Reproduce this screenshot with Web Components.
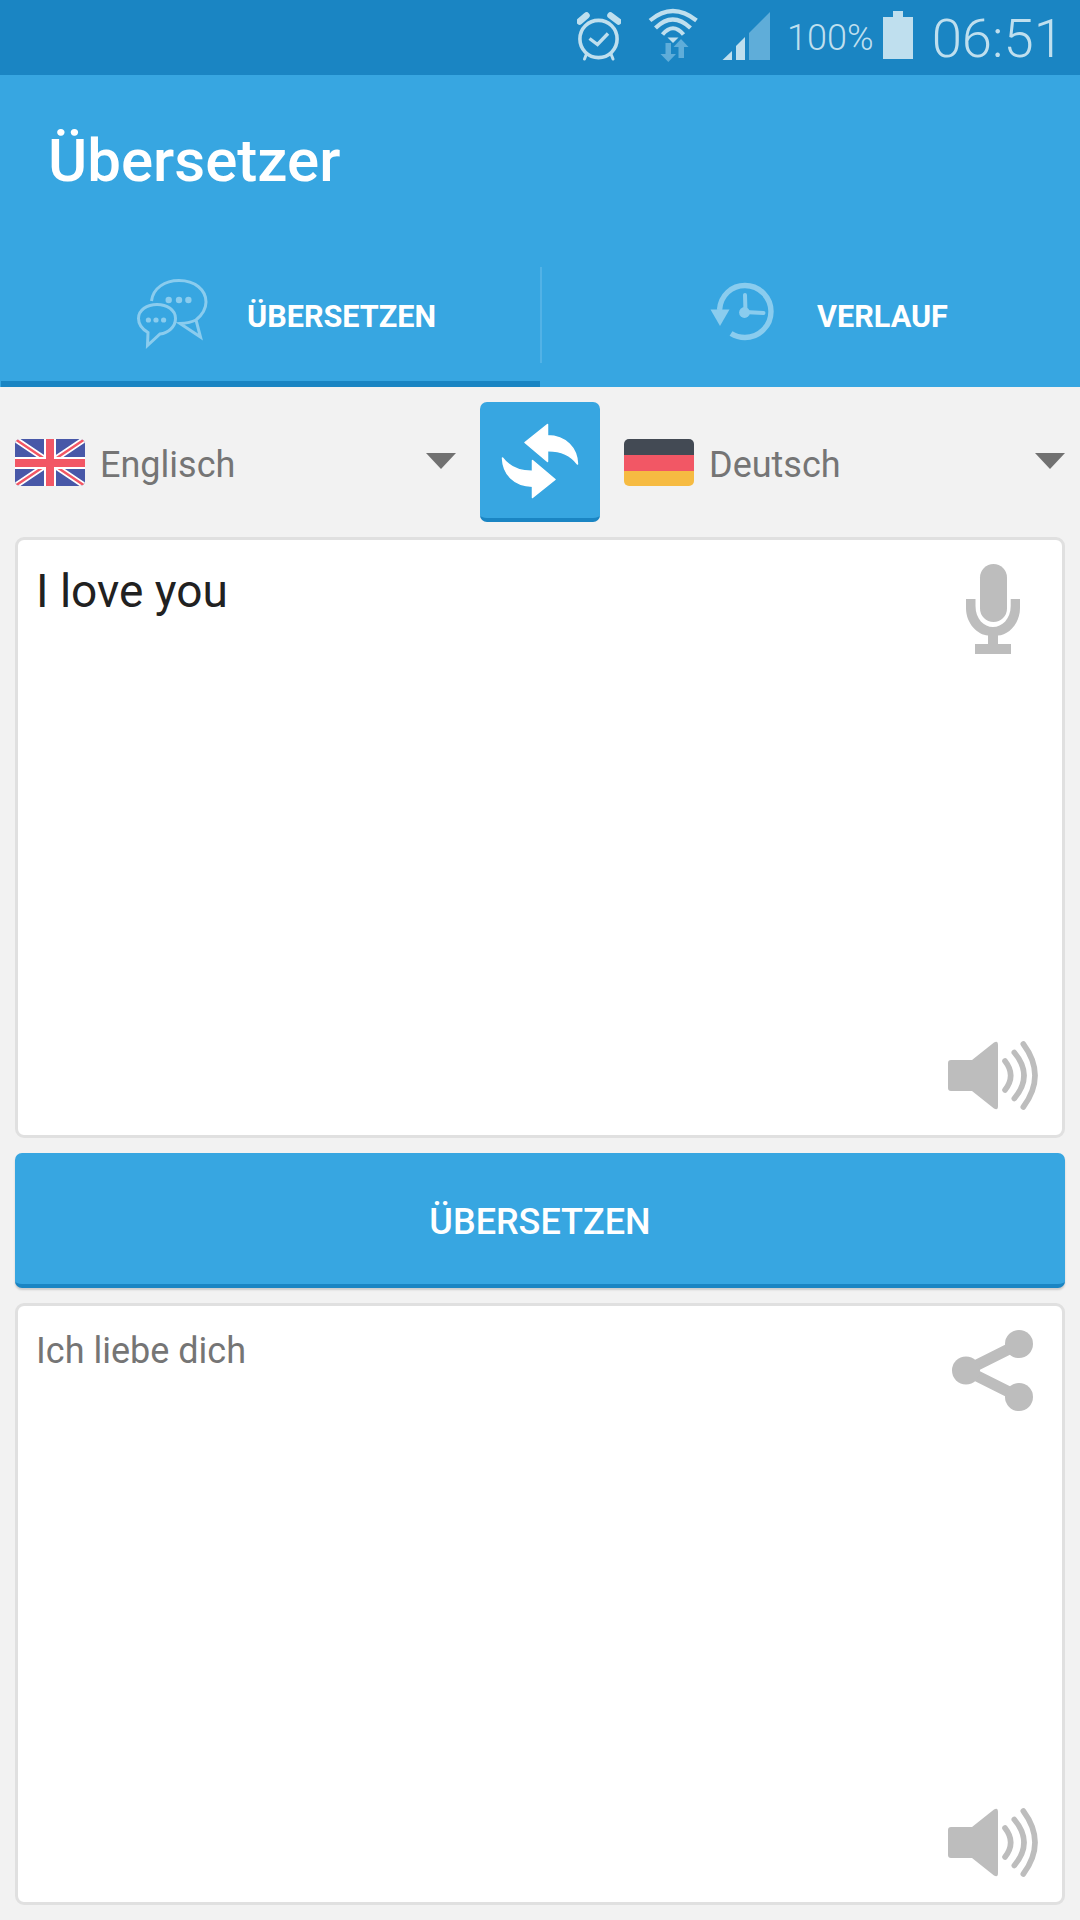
<!DOCTYPE html>
<html lang="de">
<head>
<meta charset="utf-8">
<title>Übersetzer</title>
<style>
    html, body { margin: 0; padding: 0; background: #f2f2f2; }
    body { font-family: Roboto, "Liberation Sans", sans-serif; width: 1080px; height: 1920px; overflow: hidden; }
    translator-app { --blue: #37a6e1; --dark-blue: #1a85c3; --soft: #bfdfee; --grey: #757575; --icon: #bdbdbd; }
</style>
</head>
<body>
<translator-app></translator-app>

<script>
const icons = {
    alarm: `<svg width="44" height="75" viewBox="576 0 44 75" fill="none" stroke="currentColor">
        <circle cx="597.5" cy="39" r="18.6" stroke-width="3.6"/>
        <path d="M578.5 21.5L585.5 15.5M609.5 15.5L617.5 21.5" stroke-width="6.5" stroke-linecap="round"/>
        <path d="M585.5 54L583.5 59M610 54L612 59" stroke-width="3" stroke-linecap="round"/>
        <path d="M588.5 38.5L596.5 44.5L607 33.5" stroke-width="3.4"/>
    </svg>`,
    wifi: `<svg width="50" height="75" viewBox="648 0 50 75" fill="none" stroke="currentColor">
        <path d="M650 20.5Q672.6 1.5 696.5 20.5M655.5 28Q672.6 11 690.5 28M662.5 34.5Q673 22 683.5 34.5" stroke-width="4.2"/>
        <path d="M667.5 37.5H678.5L673 43Z" fill="currentColor" stroke="none"/>
        <path d="M665.5 43H671V54H676L668.3 62L660.5 54H665.5ZM678.5 58V47H673.5L681 39L688.5 47H684V58Z" fill="#5fadd9" stroke="none"/>
    </svg>`,
    signal: `<svg width="48" height="75" viewBox="721 0 48 75">
        <path d="M721.5 60L731 51V60Z" fill="currentColor"/>
        <path d="M735 60V46L744 37V60Z" fill="currentColor"/>
        <path d="M748 60V33L769 12V60Z" fill="#5fadd9"/>
    </svg>`,
    battery: `<svg width="30" height="75" viewBox="882 0 30 75">
        <path d="M892 11H902V17H912V59H882V17H892Z" fill="currentColor"/>
    </svg>`,
    chat: `<svg width="72" height="96" viewBox="136 267 72 96" fill="none" stroke="#8accee" stroke-width="3">
        <path d="M151.5 301C153 288 165 280.5 179 280.5C195 280.5 206 290 206 302C206 309 202 315 196 320L200.5 337L180 323.5C188 323 192 322 196 320"/>
        <path d="M148 332.5C142 329 138.5 324 138.5 318.5C138.5 310 147 304.5 157 304.5C167 304.5 175.5 310 175.5 318.5C175.5 327 168 333 160 334L147.5 345.5Z"/>
        <g fill="#8accee" stroke="none">
            <circle cx="168.7" cy="300" r="3.2"/><circle cx="179" cy="300" r="3.2"/><circle cx="188.4" cy="300" r="3.2"/>
            <circle cx="148.4" cy="320" r="2.6"/><circle cx="156" cy="320" r="2.6"/><circle cx="163.6" cy="320" r="2.6"/>
        </g>
    </svg>`,
    history: `<svg width="64" height="96" viewBox="710 267 64 96" fill="none" stroke="#8accee">
        <path d="M719.5 310C720.5 295 732 285.5 745 285.5C760 285.5 771 298 771 311.5C771 326 759 337.5 745 337.5C740 337.5 735 336 731 333.5" stroke-width="5.4"/>
        <path d="M710.5 309.5H729.5L720 326Z" fill="#8accee" stroke="none"/>
        <circle cx="744.5" cy="312.5" r="5.4" fill="#8accee" stroke="none"/>
        <path d="M745 295L745.5 312L763.5 313" stroke-width="4" stroke-linecap="round"/>
    </svg>`,
    uk: `<svg width="70" height="47" viewBox="0 0 70 47">
        <defs><clipPath id="r"><rect width="70" height="47" rx="5"/></clipPath></defs>
        <g clip-path="url(#r)">
            <rect width="70" height="47" fill="#4858a8"/>
            <path d="M0 0L70 47M70 0L0 47" stroke="#fff" stroke-width="6"/>
            <path d="M0 0L70 47M70 0L0 47" stroke="#f25765" stroke-width="2.4"/>
            <path d="M29 0H41V18H70V30H41V47H29V30H0V18H29Z" fill="#fff"/>
            <path d="M31 0H39V20H70V28H39V47H31V28H0V20H31Z" fill="#f25765"/>
        </g>
    </svg>`,
    de: `<svg width="70" height="47" viewBox="0 0 70 47">
        <defs><clipPath id="g"><rect width="70" height="47" rx="5"/></clipPath></defs>
        <g clip-path="url(#g)">
            <rect width="70" height="16" fill="#434a54"/>
            <rect y="16" width="70" height="16" fill="#f25765"/>
            <rect y="32" width="70" height="15" fill="#f6bb42"/>
        </g>
    </svg>`,
    swap: `<svg width="120" height="116" viewBox="480 402 120 116" fill="#fff" stroke="#fff" stroke-width="1.5" stroke-linejoin="round">
        <path d="M525 442.5L547.5 424.5V435.7C566 436 577 448 577.5 464C570 454 560 450.5 547.5 450.7V461.5Z"/>
        <path d="M555 479.5L532.5 497.5V486.3C514 486 503 474 502.5 458C510 468 520 471.5 532.5 471.3V460.5Z"/>
    </svg>`,
    mic: `<svg slot="top" width="54" height="90" viewBox="966 564 54 90" fill="#bdbdbd" style="margin-right:18px">
        <rect x="980" y="564" width="27" height="58" rx="13.5"/>
        <path d="M966 599H975.5V606C975.5 619 984 627 993 627S1010.7 619 1010.7 606V599H1020V608C1020 624 1008 635 998 635.5V644H1011V654H975V644H988V635.5C978 635 966 624 966 608Z"/>
    </svg>`,
    share: `<svg slot="top" width="81" height="81" viewBox="952 1330 81 81" fill="#bdbdbd" style="margin-right:5px">
        <path d="M1019 1344L966 1370.5L1019 1397" fill="none" stroke="#bdbdbd" stroke-width="11"/>
        <circle cx="1019" cy="1344" r="14"/><circle cx="966" cy="1370.5" r="14"/><circle cx="1019" cy="1397" r="14"/>
    </svg>`,
    speaker: `<svg slot="bottom" width="90" height="70" viewBox="948 1042 90 70" fill="#bdbdbd">
        <path d="M951 1061H972L994 1043.5Q998 1041 998 1046V1107Q998 1112 994 1109.5L972 1092H951Q948 1092 948 1089V1064Q948 1061 951 1061Z"/>
        <path d="M1005 1062Q1016.4 1076.5 1005 1091M1014.3 1053.5Q1033.7 1076.5 1014.3 1099.5M1023.3 1045Q1046.7 1076.5 1023.3 1108" fill="none" stroke="#bdbdbd" stroke-width="5.6" stroke-linecap="round"/>
    </svg>`
};

class StatusBar extends HTMLElement {
    constructor() {
        super();
        this.attachShadow({ mode: "open" });
        this.shadowRoot.innerHTML = `
        <style>
            :host { display: flex; justify-content: flex-end; align-items: center; height: 75px; padding-right: 16px; background: var(--dark-blue); color: var(--soft); }
            svg { display: block; }
            #alarm { margin-right: 27px; }
            #wifi { margin-right: 24px; }
            #signal { margin-right: 17px; }
            #percent { font-size: 36px; font-weight: 300; margin-right: 9px; }
            #battery { margin-right: 19px; }
            #time { font-size: 54.5px; font-weight: 300; }
        </style>
        <span id="alarm">${icons.alarm}</span>
        <span id="wifi">${icons.wifi}</span>
        <span id="signal">${icons.signal}</span>
        <span id="percent">100%</span>
        <span id="battery">${icons.battery}</span>
        <span id="time">06:51</span>
        `;
    }
}
customElements.define("status-bar", StatusBar);

class AppTitle extends HTMLElement {
    constructor() {
        super();
        this.attachShadow({ mode: "open" });
        this.shadowRoot.innerHTML = `
        <style>
            :host { display: flex; align-items: center; height: 192px; box-sizing: border-box; padding: 0 0 22px 48px; background: var(--blue); color: #fff; font-size: 60px; font-weight: 500; }
        </style>
        <slot></slot>
        `;
    }
}
customElements.define("app-title", AppTitle);

class TabItem extends HTMLElement {
    constructor() {
        super();
        this.attachShadow({ mode: "open" });
        this.shadowRoot.innerHTML = `
        <style>
            :host { display: flex; align-items: center; box-sizing: border-box; height: 120px; padding-bottom: 24px; font-size: 30.6px; font-weight: 700; color: #fff; }
            :host([active]) { box-shadow: inset 0 -6px 0 var(--dark-blue); }
            ::slotted(svg) { display: block; flex: none; }
            #label { padding-top: 2px; }
        </style>
        <slot name="icon"></slot>
        <span id="label"><slot></slot></span>
        `;
    }
}
customElements.define("tab-item", TabItem);

class TabBar extends HTMLElement {
    constructor() {
        super();
        this.attachShadow({ mode: "open" });
        this.shadowRoot.innerHTML = `
        <style>
            :host { display: grid; grid-template-columns: 539px 2px 1fr; height: 120px; background: var(--blue); padding-left: 1px; }
            #divider { height: 96px; background: #52b2e6; }
        </style>
        <slot name="first"></slot>
        <div id="divider"></div>
        <slot name="second"></slot>
        `;
    }
}
customElements.define("tab-bar", TabBar);

class LangSelect extends HTMLElement {
    constructor() {
        super();
        this.attachShadow({ mode: "open" });
        this.shadowRoot.innerHTML = `
        <style>
            :host { display: flex; align-items: center; flex: 1 1 0; font-size: 36px; color: var(--grey); }
            #flag { flex: none; display: flex; margin-right: 15px; }
            #name { flex: 1; padding-top: 5px; }
            #arrow { width: 0; height: 0; border-left: 15px solid transparent; border-right: 15px solid transparent; border-top: 16px solid #717171; margin-top: -2px; }
        </style>
        <span id="flag"><slot name="flag"></slot></span>
        <span id="name"><slot></slot></span>
        <span id="arrow"></span>
        `;
    }
}
customElements.define("lang-select", LangSelect);

class SwapButton extends HTMLElement {
    constructor() {
        super();
        this.attachShadow({ mode: "open" });
        this.shadowRoot.innerHTML = `
        <style>
            :host { display: block; flex: none; width: 120px; height: 120px; box-sizing: border-box; background: var(--blue); border-bottom: 4px solid var(--dark-blue); border-radius: 7px; }
            svg { display: block; }
        </style>
        ${icons.swap}
        `;
    }
}
customElements.define("swap-button", SwapButton);

class TextCard extends HTMLElement {
    constructor() {
        super();
        this.attachShadow({ mode: "open" });
        this.shadowRoot.innerHTML = `
        <style>
            :host { display: flex; flex: none; box-sizing: border-box; background: #fff; border: 3px solid #e0e0e0; border-radius: 9px; }
            #text { flex: 1; padding-left: 18px; }
            #tools { display: flex; flex-direction: column; justify-content: space-between; align-items: flex-end; padding: 24px; }
            ::slotted(svg) { display: block; }
        </style>
        <div id="text"><slot></slot></div>
        <div id="tools">
            <slot name="top"></slot>
            <slot name="bottom"></slot>
        </div>
        `;
    }
}
customElements.define("text-card", TextCard);

class ActionButton extends HTMLElement {
    constructor() {
        super();
        this.attachShadow({ mode: "open" });
        this.shadowRoot.innerHTML = `
        <style>
            :host { display: flex; justify-content: center; align-items: center; box-sizing: border-box; height: 135px; padding-top: 7px; background: var(--blue); border-bottom: 4px solid var(--dark-blue); border-radius: 7px; box-shadow: 0 2px 2px rgba(0,0,0,.16); color: #fff; font-size: 36px; font-weight: 500; }
        </style>
        <slot></slot>
        `;
    }
}
customElements.define("action-button", ActionButton);

class TranslatorApp extends HTMLElement {
    constructor() {
        super();
        this.attachShadow({ mode: "open" });
        this.shadowRoot.innerHTML = `
        <style>
            :host { display: block; }
            #langs { display: flex; gap: 24px; padding: 15px; height: 120px; }
            #main { display: flex; flex-direction: column; gap: 15px; padding: 0 15px; }
            #input { height: 601px; }
            #output { height: 602px; }
            #inputText { display: block; font-size: 46px; color: #212121; padding-top: 24px; }
            #outputText { display: block; font-size: 36px; color: var(--grey); padding-top: 24px; }
            #first { padding-left: 135px; }
            #first svg { margin-right: 39px; }
            #second { padding-left: 168px; }
            #second svg { margin-right: 43px; }
        </style>
        <status-bar></status-bar>
        <app-title>Übersetzer</app-title>
        <tab-bar>
            <tab-item id="first" slot="first" active>${icons.chat.replace("<svg", '<svg slot="icon"')}ÜBERSETZEN</tab-item>
            <tab-item id="second" slot="second">${icons.history.replace("<svg", '<svg slot="icon"')}VERLAUF</tab-item>
        </tab-bar>
        <div id="langs">
            <lang-select>${icons.uk.replace("<svg", '<svg slot="flag"')}Englisch</lang-select>
            <swap-button></swap-button>
            <lang-select>${icons.de.replace("<svg", '<svg slot="flag"')}Deutsch</lang-select>
        </div>
        <div id="main">
            <text-card id="input">
                <span id="inputText">I love you</span>
                ${icons.mic}
                ${icons.speaker}
            </text-card>
            <action-button>ÜBERSETZEN</action-button>
            <text-card id="output">
                <span id="outputText">Ich liebe dich</span>
                ${icons.share}
                ${icons.speaker}
            </text-card>
        </div>
        `;
    }
}
customElements.define("translator-app", TranslatorApp);
</script>
</body>
</html>
